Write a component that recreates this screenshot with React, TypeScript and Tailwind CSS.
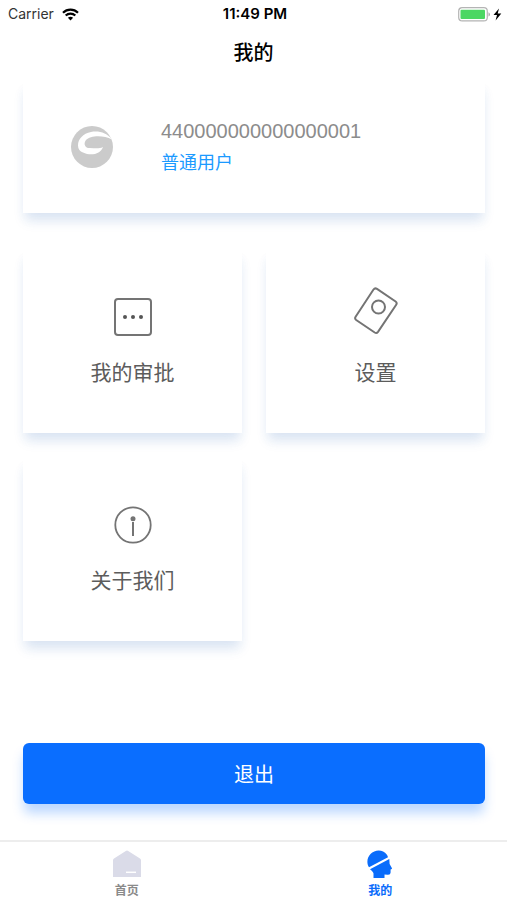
import type { ReactNode } from 'react';

const cardShadow = 'shadow-[0_10px_12px_-3px_rgba(50,110,190,0.15),0_8px_9px_0_rgba(50,110,190,0.04)]';

function WifiIcon() {
  return (
    <svg width="17" height="13" viewBox="0 0 17 13" fill="none" stroke="#000" strokeWidth="2.2" aria-hidden="true">
      <path d="M1 4.7C5.2.5 11.800.5 16 4.7" />
      <path d="M3.700 7.500C6.400 4.900 10.600 4.900 13.300 7.500" />
      <path d="M8.500 12.500 5.900 9.800C7.400 8.500 9.600 8.500 11.100 9.800Z" fill="#000" stroke="none" />
    </svg>
  );
}

function BatteryIcon() {
  return (
    <svg width="44" height="15" viewBox="0 0 44 15" aria-hidden="true">
      <rect x="0.700" y="0.700" width="28.600" height="13.200" rx="3.500" fill="#fff" stroke="#b4b4b4" strokeWidth="1.200" />
      <rect x="2.500" y="2.700" width="24.500" height="9.200" rx="1" fill="#4bd763" />
      <path d="M30.500 5.200Q32 6 32 7.400T30.500 9.600Z" fill="#aaa" />
      <path d="M41 1.500 35.500 8H39L37.600 13.500 43.300 6.600H39.700Z" fill="#000" />
    </svg>
  );
}

function SwirlAvatar() {
  return (
    <svg width="42" height="42" viewBox="0 0 42 42" aria-hidden="true">
      <circle cx="21" cy="21" r="21" fill="#cbcbcb" />
      <path
        d="M41 13.500C36 7 28 4.500 20 6C12 7.500 7 13 7 19.500C7 23 9 25.500 12 26.500C14 27 15 28 18 28.300C25 28.800 30 26.500 32 21C27 23.500 22 21.500 17 22C13.500 21 12.500 17 15 14C19 9.500 32 8.500 41 13.500Z"
        fill="#fff"
      />
    </svg>
  );
}

function ApprovalIcon() {
  return (
    <svg width="38" height="38" viewBox="0 0 38 38" fill="none" stroke="#747474" strokeWidth="2" aria-hidden="true">
      <rect x="1" y="1" width="36" height="36" rx="3" />
      <g fill="#555" stroke="none">
        <circle cx="11" cy="19" r="2" />
        <circle cx="19" cy="19" r="2" />
        <circle cx="27" cy="19" r="2" />
      </g>
    </svg>
  );
}

function SettingsIcon() {
  return (
    <svg width="44" height="48" viewBox="0 0 44 48" fill="none" stroke="#747474" strokeWidth="2" aria-hidden="true">
      <path d="M19.500 2.500Q21 .6 23 1.900L41.600 14.500Q43.400 15.900 42.200 17.700L24 44.800Q22.600 46.700 20.700 45.500L2.200 33Q.4 31.600 1.600 29.800Z" />
      <circle cx="24.500" cy="20" r="6.500" />
    </svg>
  );
}

function AboutIcon() {
  return (
    <svg width="38" height="38" viewBox="0 0 38 38" fill="none" stroke="#747474" aria-hidden="true">
      <circle cx="19" cy="19" r="17.700" strokeWidth="1.800" />
      <circle cx="19" cy="12.700" r="2.500" fill="#747474" stroke="none" />
      <path d="M19 16V30" strokeWidth="2" />
    </svg>
  );
}

function HomeIcon() {
  return (
    <svg className="shrink-0" width="28" height="28" viewBox="0 0 28 28" aria-hidden="true">
      <path d="M12.800 1Q14 .2 15.200 1L27 8.500Q28 9.200 28 10.500V27H0V10.500Q0 9.200 1 8.500Z" fill="#dadbe8" />
      <path d="M13 22.300H23" stroke="#fff" strokeWidth="1.500" />
    </svg>
  );
}

function ProfileIcon() {
  return (
    <svg className="shrink-0" width="26" height="28" viewBox="0 0 26 28" fill="#0a6cfb" aria-hidden="true">
      <path d="M2 17.300C-.7 13 .1 7.500 3.500 4C8-.8 16-.8 19.700 4.500Q20.600 5.700 21 7.200Z" />
      <path d="M3 19.300 22.300 8.900 22.600 14 25 18.200Q25.300 19.200 23.600 19.500V22.500Q23.600 25 20.500 24.700L17.500 24.500V28H6.500V23.500Q6.400 22 3 19.300Z" />
    </svg>
  );
}

function MenuCard({ icon, label, raised }: { icon: ReactNode; label: string; raised?: boolean }) {
  return (
    <button type="button" className={`flex h-46 flex-col items-center bg-white pt-9 text-[21px] leading-8 text-[#5c5c5c] ${cardShadow}`}>
      <span className={`flex h-16 items-center ${raised ? 'pb-3' : ''}`}>{icon}</span>
      <span className="mt-2">{label}</span>
    </button>
  );
}

function Tab({ icon, label, active }: { icon: ReactNode; label: string; active?: boolean }) {
  return (
    <a
      href="#"
      aria-current={active ? 'page' : undefined}
      className={`flex flex-1 flex-col items-center pt-2 text-xs font-bold ${active ? 'text-[#0a6cfb]' : 'text-[#8a8a8a]'}`}
    >
      {icon}
      <span className="mt-1 leading-[18px]">{label}</span>
    </a>
  );
}

export default function App() {
  return (
    <div className="flex min-h-screen flex-col bg-white font-['Liberation_Sans','Noto_Sans_CJK_SC',sans-serif]">
      <div className="grid h-7 grid-cols-3 items-center pr-[5px] pl-2 font-['Inter',sans-serif] text-sm">
        <div className="flex items-center gap-2 text-[#333]">
          Carrier
          <WifiIcon />
        </div>
        <time className="text-center text-[15px] font-semibold text-black">11:49 PM</time>
        <div className="flex justify-end">
          <BatteryIcon />
        </div>
      </div>
      <header className="flex h-[50px] items-center justify-center">
        <h1 className="text-xl font-medium text-black">我的</h1>
      </header>

      <main className="flex flex-1 flex-col pt-0.5 pr-[22px] pl-[23px]">
        <section className={`flex h-[133px] items-center gap-12 bg-white pl-12 ${cardShadow}`}>
          <SwirlAvatar />
          <div className="flex flex-col gap-1">
            <p className="text-xl leading-7 text-[#8c8c8c]">440000000000000001</p>
            <p className="text-lg leading-7 text-[#1b9aff]">普通用户</p>
          </div>
        </section>

        <nav className="mt-9 grid grid-cols-2 gap-6">
          <MenuCard icon={<ApprovalIcon />} label="我的审批" />
          <MenuCard icon={<SettingsIcon />} label="设置" raised />
          <MenuCard icon={<AboutIcon />} label="关于我们" />
        </nav>

        <button
          type="button"
          className="mt-auto mb-9 h-[61px] rounded-md bg-[#0a6eff] pt-0.5 text-xl text-white shadow-[0_10px_12px_-1px_rgba(10,110,255,0.28)]"
        >
          退出
        </button>
      </main>

      <nav className="flex h-15 border-t-2 border-[#ededed]">
        <Tab icon={<HomeIcon />} label="首页" />
        <Tab icon={<ProfileIcon />} label="我的" active />
      </nav>
    </div>
  );
}
